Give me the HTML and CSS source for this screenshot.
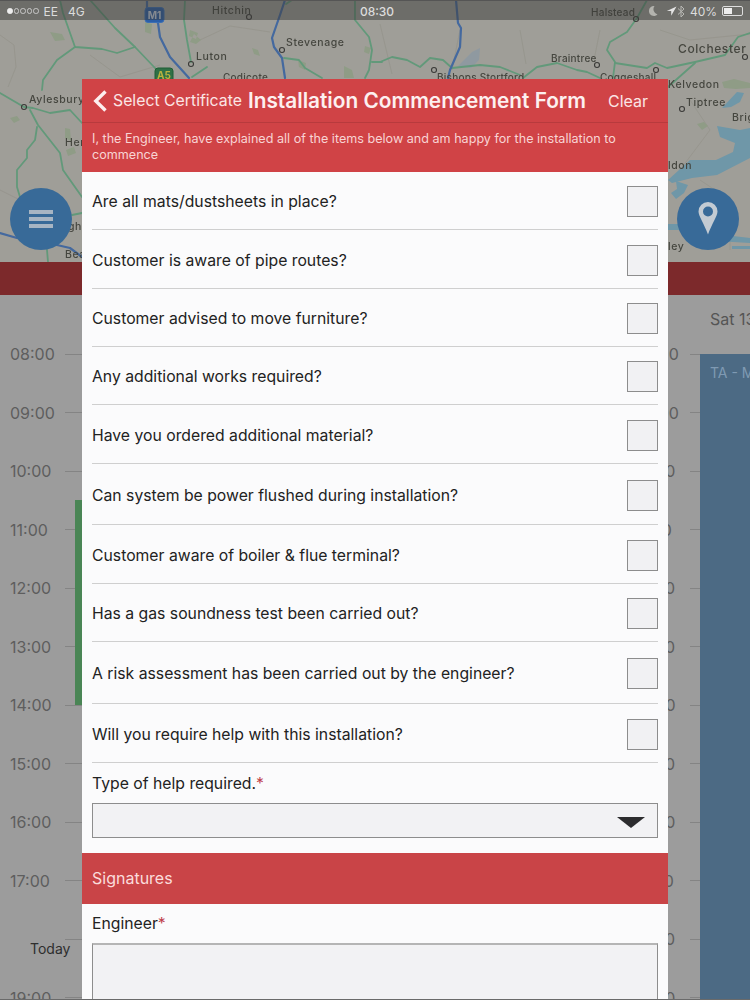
FILE: index.html
```html
<!DOCTYPE html>
<html lang="en">
<head>
<meta charset="utf-8">
<title>Installation Commencement Form</title>
<link rel="stylesheet" href="styles.css">
</head>
<body>
<div class="app">
  <section class="map">
    <svg class="map-art" viewBox="0 0 750 262" width="750" height="262" xmlns="http://www.w3.org/2000/svg">
      <g class="minor">
        <path d="M0 35l14 10 2 22 -8 20M90 55l30 22 40 -12M200 40l30 -14 40 6M380 24l12 50M460 30l-8 40M520 30l6 34M600 30l-6 30M660 30l30 10 60 -6M690 100l20 30 -30 40M700 180l30 20v50M0 190l20 10 30 30"/>
      </g>
      <g class="land">
        <path d="M50 32l12 2 3 6-10 1zM145 22l7 2-1 10-6-2zM190 30l8 3-2 6-7-3zM194 34l-4 8 6 2 5-4zM252 48l6 2 2 6-6-2z"/>
        <path d="M298 60l8 3-1 7-6-3zM344 66l8 4 2 8h-10zM365 46l6 2-2 6-5-2z"/>
        <path d="M722 82l12-3 16 4v5l-14 1-12-1zM697 124l7-2 4 4-6 4zM10 118l7-2 3 4-6 3zM65 128l5 1 1 12-6-3zM66 150l8-3 2 6-8 3z"/>
      </g>
      <path class="water-faint" d="M458 66l14-14 8-4-1 12-8 8z"/>
      <g class="water">
        <path d="M722 108l15-16 7 1-4 9-9 5z"/>
        <path d="M717 126l23 4 10-2v30l-33 17-25 3-20 5-4-3 22-20h26l17-8 2-9-15-6z"/>
        <path d="M676 181l12 4-4 8-8 6-5-6 6-4zM668 224h14l4 6h-18zM716 234l34 4v5l-34-2zM732 246h18v3h-18z"/>
      </g>
      <g class="road green">
        <path d="M90 0l25 28 20 19 20 21 8 10"/>
        <path d="M60 0l3 13 12 34 27 2 15 4 18-6"/>
        <path d="M75 47L57 60 43 80l-1 10"/>
        <path d="M0 93l24 14 9 1 17 5 20-3 12 13"/>
        <path d="M30 110l8 15 22 28 3 17 19 27"/>
        <path d="M37 127l-2 13-8 10v8l-10 12v17l3 10"/>
        <path d="M72 215l10-2M47 250l1 12"/>
        <path d="M185 0l-1 20 3 20 4 22"/>
        <path d="M192 77l15-10"/>
        <path d="M284 58l15 2 6 8 17 10"/>
        <path d="M292 0l-6 4"/>
        <path d="M355 0v20l14 17 3 13-3 20-4 8M372 62h10"/>
        <path d="M380 62l12-5 15 3 13 7 10-9 13 2 9 8 28-3 20 2 20 8"/>
        <path d="M523 78l14-11 20-4 20 7 10 2 13 6"/>
        <path d="M647 0l-10 18-10 14-17 10-3 8 8 12-2 16"/>
        <path d="M615 63l32 5 8-5 12 5 28-6 30-7 13-18 12-4"/>
        <path d="M695 63l-27 24"/>
      </g>
      <g class="road blue">
        <path d="M147 0v10l11 13 2 14 10 20 19 21"/>
        <path d="M285 0l-5 15-8 23 2 9 8 11 3 20"/>
        <path d="M456 0l2 23 3 5-1 19-10 23-2 8"/>
        <path d="M0 233l17 5M57 245l13 3 12 9"/>
      </g>
      <g class="towns">
        <circle cx="249" cy="17" r="2.5"/><circle cx="282" cy="50" r="2.5"/><circle cx="191" cy="64" r="2.5"/>
        <circle cx="24" cy="107" r="2.5"/><circle cx="434" cy="70" r="2.5"/><circle cx="597" cy="65" r="2.5"/>
        <circle cx="656" cy="70" r="2.5"/><circle cx="745" cy="57" r="2.5"/><circle cx="682" cy="109" r="2.5"/>
        <circle cx="636" cy="19" r="2.5"/>
      </g>
      <g class="badge-m1">
        <rect x="145" y="7.500" width="19" height="15" rx="3"/>
        <text x="154.500" y="19">M1</text>
      </g>
      <g class="badge-a5">
        <rect x="155" y="68" width="18" height="14" rx="3"/>
        <text x="164" y="79">A5</text>
      </g>
      <g class="places">
        <text x="212" y="14">Hitchin</text>
        <text x="286" y="46">Stevenage</text>
        <text x="196" y="60">Luton</text>
        <text x="223" y="81" class="small">Codicote</text>
        <text x="29" y="103">Aylesbury</text>
        <text x="65" y="146">Hen</text>
        <text x="591" y="16" class="small">Halstead</text>
        <text x="551" y="62" class="small">Braintree</text>
        <text x="437" y="81" class="small">Bishops Stortford</text>
        <text x="600" y="81" class="small">Coggeshall</text>
        <text x="678" y="53" class="big">Colchester</text>
        <text x="668" y="88">Kelvedon</text>
        <text x="686" y="106">Tiptree</text>
        <text x="732" y="121">Brig</text>
        <text x="668" y="169">ldon</text>
        <text x="68" y="230">gh</text>
        <text x="65" y="258">Bea</text>
        <text x="668" y="250">ley</text>
      </g>
    </svg>
    <header class="status">
      <div class="status-left">
        <span class="signal"><i class="dot on"></i><i class="dot"></i><i class="dot"></i><i class="dot"></i><i class="dot"></i></span>
        <span>EE</span>
        <span class="net">4G</span>
      </div>
      <div class="status-time">08:30</div>
      <div class="status-right">
        <svg class="ico ico-moon" width="10" height="12" viewBox="0 0 10 12"><path class="moon" d="M6.500 1A5 5 0 1 0 9.500 9.500 5.500 5.500 0 0 1 6.500 1z"/></svg>
        <svg class="ico ico-arrow" width="11" height="11" viewBox="0 0 11 11"><path class="arrow" d="M10.500.5L.8 5h4.400v4.700z"/></svg>
        <svg class="ico" width="8" height="13" viewBox="0 0 8 13"><path class="bt" d="M1 3.500l6 5.500-3 3V1l3 3-6 5.500"/></svg>
        <span class="pct">40%</span>
        <span class="battery"><span class="battery-fill"></span></span>
      </div>
    </header>
    <button class="fab fab-left" aria-label="Menu">
      <span class="bar"></span><span class="bar"></span><span class="bar"></span>
    </button>
    <button class="fab fab-right" aria-label="Location">
      <svg class="pin-icon" width="20" height="33" viewBox="0 0 20 33"><path class="pin" fill-rule="evenodd" d="M10 0a9.500 9.500 0 0 1 9.500 9.500c0 4.500-5.500 12-9.500 23C6 21.500.5 14 .5 9.500A9.500 9.500 0 0 1 10 0zm0 4.500a5 5 0 1 0 0 10 5 5 0 0 0 0-10z"/></svg>
    </button>
  </section>
  <div class="band"></div>
  <section class="calendar">
    <div class="day-head"><span class="day-name">Sat 13</span></div>
    <div class="week">
      <div class="hours">
        <div class="hour"><span>08:00</span><i></i></div>
        <div class="hour"><span>09:00</span><i></i></div>
        <div class="hour"><span>10:00</span><i></i></div>
        <div class="hour"><span>11:00</span><i></i></div>
        <div class="hour"><span>12:00</span><i></i></div>
        <div class="hour"><span>13:00</span><i></i></div>
        <div class="hour"><span>14:00</span><i></i></div>
        <div class="hour"><span>15:00</span><i></i></div>
        <div class="hour"><span>16:00</span><i></i></div>
        <div class="hour"><span>17:00</span><i></i></div>
        <div class="hour"><span></span><i></i></div>
        <div class="hour"><span>19:00</span><i></i></div>
      </div>
      <div class="middle"></div>
      <div class="hours hours-right">
        <div class="hour"><span>08:00</span><i></i></div>
        <div class="hour"><span>09:00</span><i></i></div>
        <div class="hour"><span>10:00</span><i></i></div>
        <div class="hour"><span>11:00</span><i></i></div>
        <div class="hour"><span>12:00</span><i></i></div>
        <div class="hour"><span>13:00</span><i></i></div>
        <div class="hour"><span>14:00</span><i></i></div>
        <div class="hour"><span>15:00</span><i></i></div>
        <div class="hour"><span>16:00</span><i></i></div>
        <div class="hour"><span>17:00</span><i></i></div>
        <div class="hour"><span>18:00</span><i></i></div>
        <div class="hour"><span>19:00</span><i></i></div>
      </div>
      <div class="event-col"><span class="event-title">TA - M</span></div>
    </div>
    <div class="green-event"></div>
    <div class="today">Today</div>
  </section>

  <main class="modal">
    <div class="modal-head">
      <div class="back">
        <svg width="14" height="22" viewBox="0 0 14 22"><path class="chev" d="M12.500 1.500L2.800 11l9.700 9.500"/></svg>
        <span>Select Certificate</span>
      </div>
      <h1>Installation Commencement Form</h1>
      <div class="clear">Clear</div>
    </div>
    <p class="intro">I, the Engineer, have explained all of the items below and am happy for the installation to commence</p>
    <div class="checks">
      <div class="row h58"><span>Are all mats/dustsheets in place?</span><span class="box"></span></div>
      <div class="row h59"><span>Customer is aware of pipe routes?</span><span class="box"></span></div>
      <div class="row h58"><span>Customer advised to move furniture?</span><span class="box"></span></div>
      <div class="row h58"><span>Any additional works required?</span><span class="box"></span></div>
      <div class="row h59"><span>Have you ordered additional material?</span><span class="box"></span></div>
      <div class="row h61"><span>Can system be power flushed during installation?</span><span class="box"></span></div>
      <div class="row h59"><span>Customer aware of boiler &amp; flue terminal?</span><span class="box"></span></div>
      <div class="row h58"><span>Has a gas soundness test been carried out?</span><span class="box"></span></div>
      <div class="row h62"><span>A risk assessment has been carried out by the engineer?</span><span class="box"></span></div>
      <div class="row h59"><span>Will you require help with this installation?</span><span class="box"></span></div>
    </div>
    <div class="field">
      <label class="label">Type of help required.<em>*</em></label>
      <div class="select"><i class="caret"></i></div>
    </div>
    <div class="section-bar">Signatures</div>
    <div class="field sign">
      <label class="label">Engineer<em>*</em></label>
      <div class="sign-pad"></div>
    </div>
  </main>
</div>
</body>
</html>
```

FILE: styles.css
```css
* { box-sizing: border-box; }
html, body { margin: 0; padding: 0; }
body { width: 750px; height: 1000px; overflow: hidden; background: #9c9c9c; font-family: Inter, "Liberation Sans", sans-serif; }
.app { position: relative; width: 750px; height: 1000px; overflow: hidden; background: #9c9c9c; border-bottom: 1px solid #6a6a6a; }

/* Map */
.map { position: relative; height: 262px; background: #9f9e98; overflow: hidden; }
.map-art { display: block; filter: blur(.5px); }
.minor { fill: none; stroke: #93928a; stroke-width: .7; }
.land path { fill: #8f9c86; }
.water path { fill: #6f97a8; }
.water-faint { fill: #8f99a0; }
.road { fill: none; stroke-linecap: round; stroke-linejoin: round; }
.green { stroke: #62997a; stroke-width: 1.800; }
.blue { stroke: #44699f; stroke-width: 2.200; }
.towns circle { fill: none; stroke: #3a3a38; stroke-width: 1.100; }
.badge-m1 rect { fill: #2a5ea8; stroke: #3b6fb5; }
.badge-m1 text { fill: #cfd8e6; font: 700 10px Inter, sans-serif; text-anchor: middle; }
.badge-a5 rect { fill: #2f7046; stroke: #1f5f36; }
.badge-a5 text { fill: #b9b23e; font: 700 10px Inter, sans-serif; text-anchor: middle; }
.places text { fill: #45463f; font: 500 10.500px Inter, sans-serif; letter-spacing: .6px; }
.places text.big { font-size: 12px; }
.places text.small { font-size: 10px; letter-spacing: .25px; }

/* Status bar */
.status { position: absolute; left: 0; top: 0; width: 750px; height: 20px; padding: 1px 7px 0; display: grid; grid-template-columns: 1fr auto 1fr; align-items: center; background: rgba(60,60,58,.5); border-top: 1px solid #555; color: #dcdcdc; font-size: 12px; }
.status-left { display: flex; align-items: center; gap: 5px; }
.net { margin-left: 5px; }
.signal { display: flex; gap: 1px; }
.dot { display: block; width: 5.500px; height: 5.500px; border-radius: 50%; border: 1px solid #c8c8c8; }
.dot.on { background: #eee; border-color: #eee; }
.status-time { font-weight: 500; margin-left: 4px; }
.status-right { display: flex; align-items: center; justify-content: flex-end; gap: 5px; }
.ico { display: block; }
.ico-moon { margin-right: 3px; }
.ico-arrow { margin-right: -5px; }
.moon { fill: #b3b3ae; }
.arrow { fill: #e4e4e4; }
.bt { fill: none; stroke: #b8b8b4; stroke-width: 1; }
.battery { display: block; width: 21px; height: 10px; border: 1px solid #ddd; border-radius: 2px; padding: 1px; }
.battery-fill { display: block; width: 8px; height: 6px; background: #eee; }

/* Round buttons */
.fab { position: absolute; top: 188px; width: 62px; height: 62px; border: 0; border-radius: 50%; background: #386a98; display: flex; flex-direction: column; align-items: center; justify-content: center; gap: 3px; padding: 0; }
.fab-left { left: 10px; }
.fab-right { left: 677px; }
.bar { display: block; width: 24px; height: 4px; background: #a7b5c3; }
.pin-icon { display: block; margin-bottom: 2px; }
.pin { fill: #c3cbd3; }

/* Backdrop schedule */
.band { height: 33px; background: #7c292b; }
.calendar { position: relative; height: 705px; background: #9c9c9c; }
.day-head { height: 59px; padding: 14px 0 0 710px; }
.day-name { color: #555; font-size: 16px; white-space: nowrap; }
.week { display: flex; height: 646px; }
.hours { flex: none; width: 82px; }
.hour { display: flex; align-items: center; height: 58.500px; position: relative; top: -29px; padding-left: 10px; }
.hour span { flex: none; width: 55px; color: #5e5e5e; font-size: 16px; }
.hour i { display: block; flex: none; width: 17px; height: 1px; background: #848484; }
.middle { flex: none; width: 542px; }
.hours-right { width: 76px; }
.hours-right .hour { padding-left: 0; }
.hours-right .hour span { width: 66px; padding-left: 10px; }
.hours-right .hour i { width: 10px; }
.event-col { flex: none; width: 50px; padding: 10px 0 0 10px; background: #4c6a84; overflow: hidden; white-space: nowrap; color: #7f9ab3; font-size: 14px; }
.green-event { position: absolute; left: 75px; top: 205px; width: 7px; height: 205px; background: #4a8555; }
.today { position: absolute; left: 30px; top: 645px; color: #2e2e2e; font-size: 14px; }

/* Modal */
.modal { position: absolute; left: 82px; top: 79px; width: 586px; height: 921px; background: #fbfbfc; overflow: hidden; }
.modal-head { display: flex; align-items: center; height: 44px; padding: 0 20px 0 11px; background: #d04346; border-bottom: 1px solid #b83a3d; color: #fbe5e5; }
.back { display: flex; align-items: center; gap: 6px; flex: none; font-size: 15.800px; white-space: nowrap; }
.chev { fill: none; stroke: #fdeeee; stroke-width: 3.400; }
.modal-head h1 { flex: 1; margin: 0 0 0 6px; font-size: 20.800px; font-weight: 600; white-space: nowrap; color: #fdf0f0; }
.clear { flex: none; font-size: 16px; }
.intro { height: 49px; margin: 0; padding: 8px 40px 0 10px; background: #d04346; color: #f8d4d4; font-size: 12.600px; line-height: 16px; }
.checks { padding: 0 10px; }
.row { display: flex; align-items: center; justify-content: space-between; border-bottom: 1px solid #cfcfcf; color: #222; font-size: 15.750px; }
.row > span:first-child { position: relative; top: 1px; }
.h58 { height: 58px; }
.h59 { height: 59px; }
.h61 { height: 61px; }
.h62 { height: 62px; }
.box { display: block; flex: none; width: 31px; height: 31px; margin-top: 2px; background: #f1f1f3; border: 1px solid #8d8d8d; }
.field { padding: 0 10px; }
.label { display: block; padding-top: 11px; height: 40px; color: #222; font-size: 15.750px; line-height: 20px; }
.label em { color: #c0404a; font-style: normal; }
.select { position: relative; height: 35px; background: #f2f2f4; border: 1px solid #8d8d8d; }
.caret { position: absolute; right: 12px; top: 13px; width: 0; height: 0; border-left: 14px solid transparent; border-right: 14px solid transparent; border-top: 11px solid #2c2c2e; }
.section-bar { height: 51px; margin-top: 15px; padding-left: 10px; background: #c94447; color: #fbdcdc; font-size: 16px; line-height: 51px; }
.sign .label { padding-top: 10px; height: 39px; }
.sign-pad { height: 120px; background: #f2f2f4; border: 1px solid #8d8d8d; border-top: 2px solid #b5b5b5; }
```
